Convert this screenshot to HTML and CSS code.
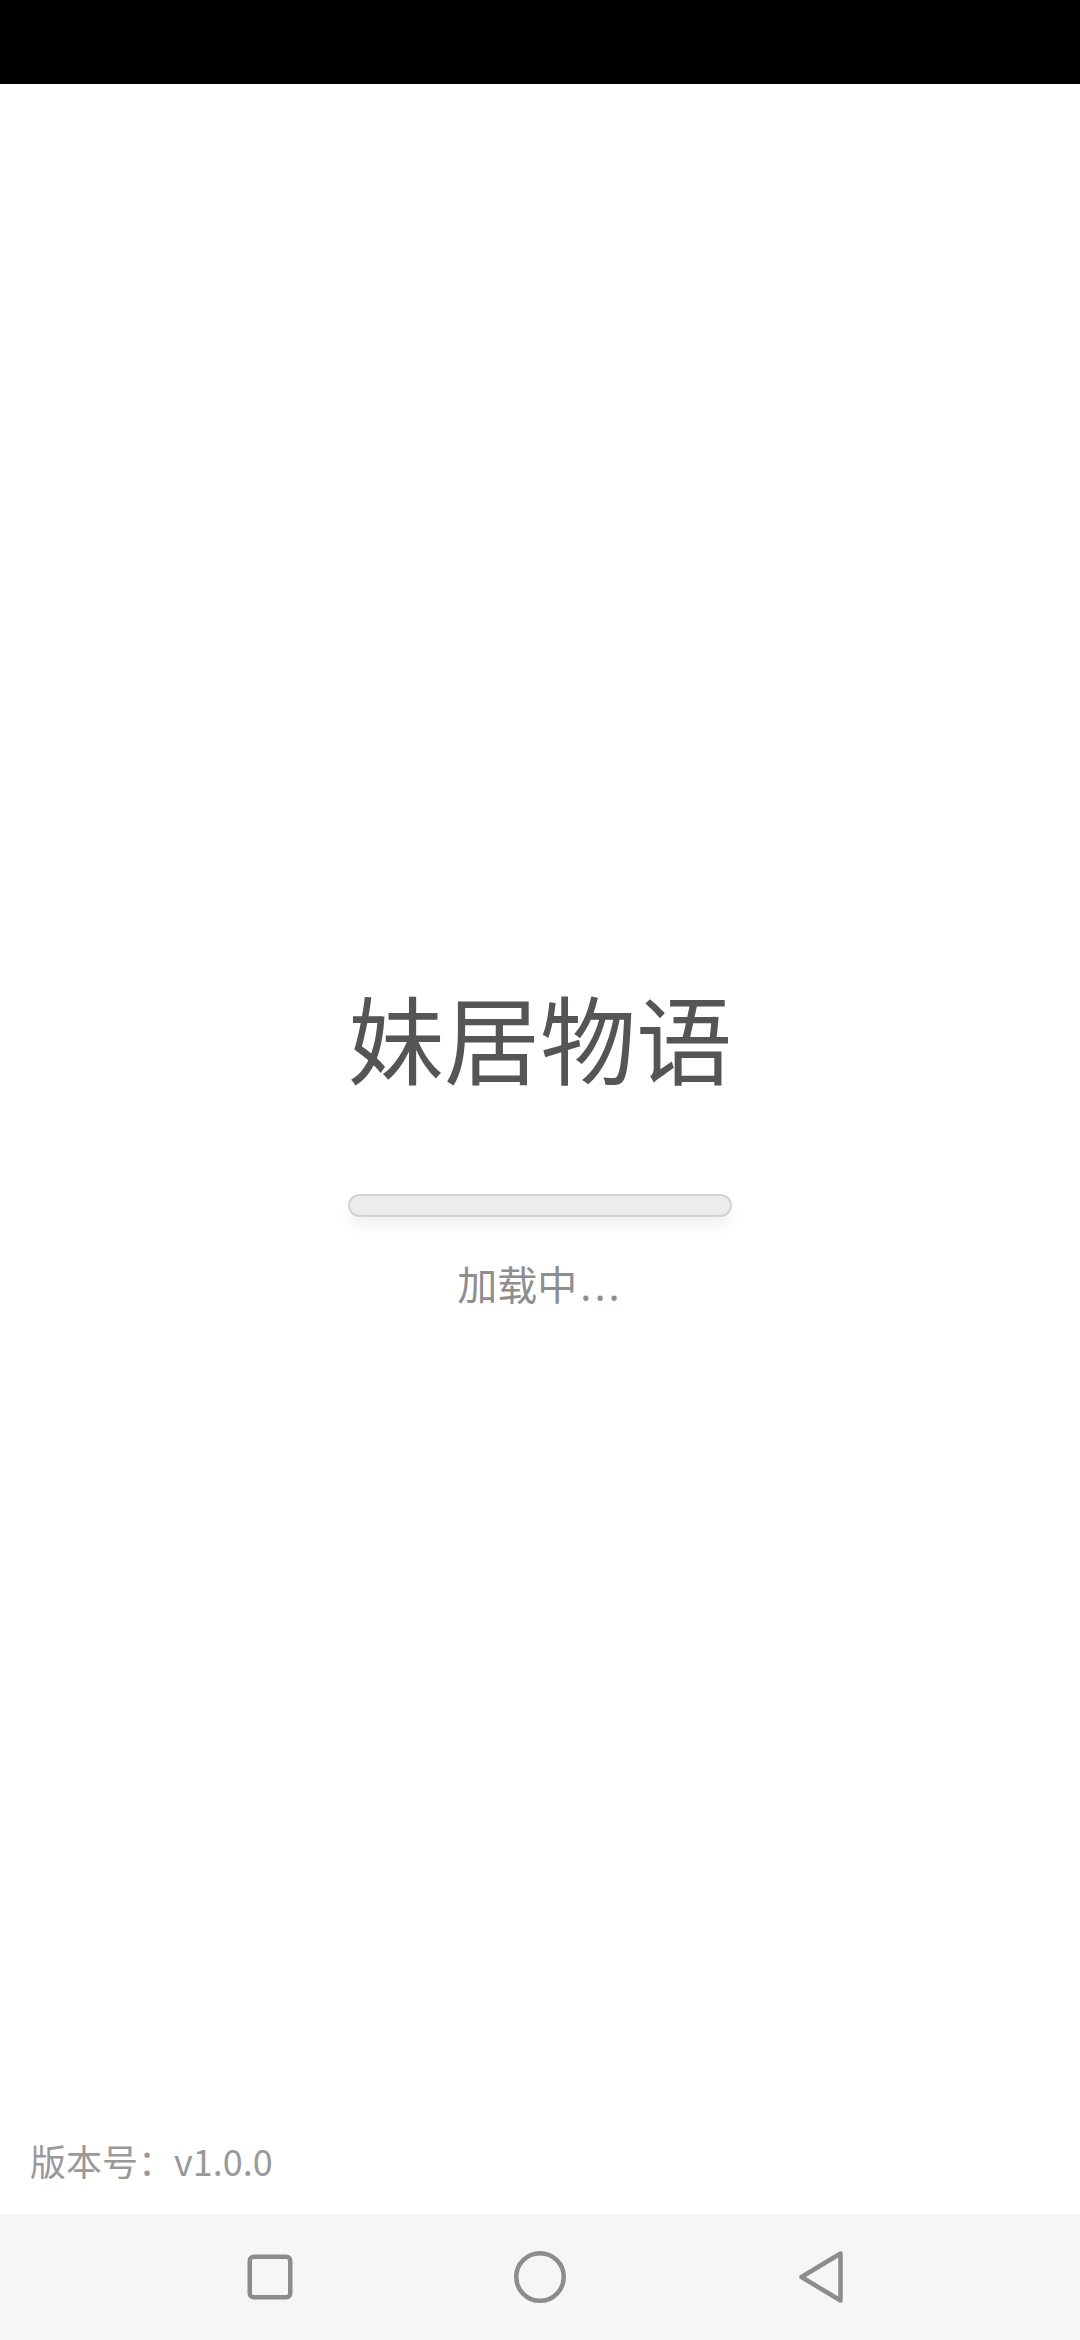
FILE: index.html
```html
<!DOCTYPE html>
<html lang="zh-CN">
<head>
<meta charset="utf-8">
<meta name="viewport" content="width=1080">
<title>妹居物语</title>
<link rel="stylesheet" href="styles.css">
</head>
<body>
<div class="screen">
  <div class="status-bar"></div>
  <main class="splash">
    <h1 class="title">妹居物语</h1>
    <div class="progress"><div class="progress-fill"></div></div>
    <p class="loading">加载中<span class="dots">...</span></p>
  </main>
  <div class="version">版本号：v1.0.0</div>
  <nav class="nav-bar">
    <svg class="nav-icon" width="64" height="64" viewBox="0 0 64 64"><rect x="11.75" y="11.75" width="40.5" height="40.5" rx="4" fill="none" stroke="#8c8c8c" stroke-width="4.5"/></svg>
    <svg class="nav-icon" width="64" height="64" viewBox="0 0 64 64"><circle cx="32" cy="32" r="23.75" fill="none" stroke="#8c8c8c" stroke-width="4.5"/></svg>
    <svg class="nav-icon nav-back" width="72" height="64" viewBox="0 0 72 64"><path d="M23.5 32 L62.5 8.5 L62.5 55.5 Z" fill="none" stroke="#8c8c8c" stroke-width="4.5" stroke-linejoin="round"/></svg>
  </nav>
</div>
</body>
</html>
```
FILE: styles.css
```css
* { box-sizing: border-box; }
html, body { margin: 0; padding: 0; background: #ffffff; }
body { font-family: "Noto Sans CJK SC", "Noto Sans", sans-serif; }
.screen {
  width: 1080px;
  height: 2340px;
  display: flex;
  flex-direction: column;
  overflow: hidden;
}
.status-bar { height: 84px; background: #000; flex: none; }
.splash {
  flex: 1;
  display: flex;
  flex-direction: column;
  align-items: center;
  padding-top: 896px;
}
.title {
  margin: 0;
  font-size: 96px;
  line-height: 112px;
  font-weight: 400;
  color: #555555;
}
.progress {
  margin-top: 102px;
  width: 384px;
  height: 23px;
  border-radius: 12px;
  border: 2.5px solid #d3d3d3;
  background: #ececec;
  box-shadow: 0 10px 14px rgba(0,0,0,0.05);
}
.progress-fill { width: 0; height: 100%; }
.loading {
  margin: 38px 0 0;
  font-size: 40px;
  line-height: 56px;
  color: #8e8e8e;
}
.dots { letter-spacing: 3px; margin-left: 3px; }
.version {
  padding-left: 30px;
  font-size: 36px;
  line-height: 48px;
  color: #999999;
  padding-bottom: 30px;
  flex: none;
}
.nav-bar {
  height: 126px;
  flex: none;
  background: #f6f6f6;
  display: flex;
  align-items: center;
  padding-left: 238px;
  gap: 206px;
}
.nav-icon { display: block; flex: none; }
```
